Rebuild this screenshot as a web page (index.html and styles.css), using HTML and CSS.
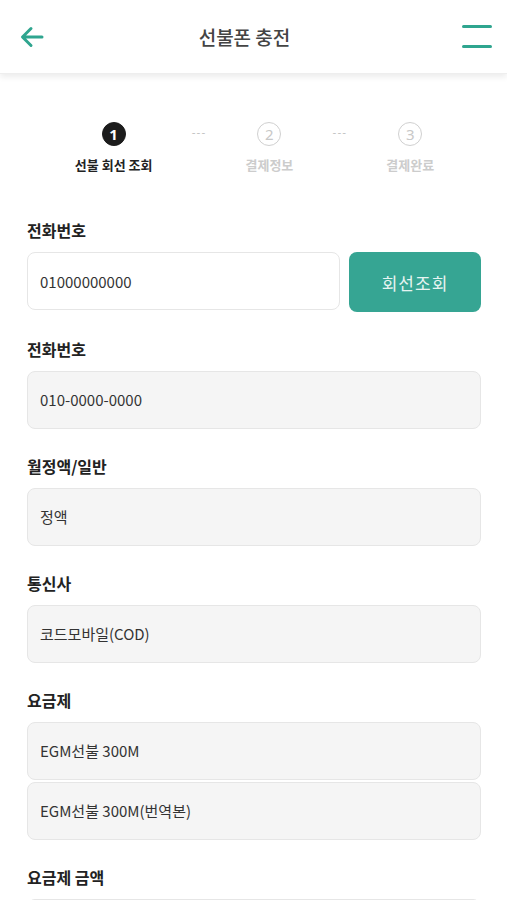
FILE: index.html
```html
<!DOCTYPE html>
<html>
<head>
<title>선불폰 충전</title>
<link rel="stylesheet" href="styles.css">
</head>
<body>

<div class="header">
  <a class="back">
    <svg width="26" height="26" viewBox="0 0 26 26"><path d="M23 13H4M12 4.5L3.5 13 12 21.5" fill="none" stroke="#2fa58f" stroke-width="3" stroke-linecap="round" stroke-linejoin="round"/></svg>
  </a>
  <h1>선불폰 충전</h1>
  <a class="menu">
    <span></span><span></span>
  </a>
</div>

<div class="steps">
  <div class="step active">
    <div class="num">1</div>
    <div class="name">선불 회선 조회</div>
  </div>
  <div class="dots">---</div>
  <div class="step">
    <div class="num">2</div>
    <div class="name">결제정보</div>
  </div>
  <div class="dots">---</div>
  <div class="step">
    <div class="num">3</div>
    <div class="name">결제완료</div>
  </div>
</div>

<form class="form">
  <label class="title">전화번호</label>
  <div class="row">
    <input type="text" class="field" value="01000000000">
    <button type="button" class="btn">회선조회</button>
  </div>

  <label class="title">전화번호</label>
  <div class="field readonly">010-0000-0000</div>

  <label class="title">월정액/일반</label>
  <div class="field readonly">정액</div>

  <label class="title">통신사</label>
  <div class="field readonly">코드모바일(COD)</div>

  <label class="title">요금제</label>
  <div class="field readonly">EGM선불 300M</div>
  <div class="field readonly stack">EGM선불 300M(번역본)</div>

  <label class="title">요금제 금액</label>
  <div class="field readonly">&nbsp;</div>
</form>

</body>
</html>
```

FILE: styles.css
```css
body {
  margin: 0;
  font-family: "Noto Sans CJK KR", "Noto Sans", sans-serif;
  color: #222;
  background: #fff;
}
.header {
  height: 74px;
  display: flex;
  align-items: center;
  justify-content: space-between;
  padding: 0 15px 0 19px;
  box-shadow: 0 3px 6px rgba(0,0,0,0.08);
  border-bottom: 1px solid #eee;
  box-sizing: border-box;
}
.header h1 {
  margin: 0;
  font-size: 19px;
  font-weight: 500;
  color: #444;
}
.back {
  display: flex;
  width: 30px;
}
.menu {
  display: flex;
  flex-direction: column;
  align-items: flex-end;
  gap: 17px;
  width: 52px;
}
.menu span {
  display: block;
  width: 30px;
  height: 3px;
  background: #2fa58f;
  border-radius: 2px;
}
.steps {
  display: flex;
  justify-content: center;
  align-items: flex-start;
  margin-top: 48px;
  padding-left: 2px;
}
.step {
  display: flex;
  flex-direction: column;
  align-items: center;
}
.num {
  width: 22px;
  height: 22px;
  border-radius: 50%;
  border: 1px solid #d0d0d0;
  color: #c8c8c8;
  font-family: "Noto Sans", sans-serif;
  font-size: 15px;
  line-height: 22px;
  text-align: center;
}
.step.active .num {
  background: #1c1c1c;
  border-color: #1c1c1c;
  color: #fff;
  font-weight: bold;
}
.name {
  margin-top: 9px;
  font-size: 13px;
  font-weight: bold;
  color: #ccc;
}
.step.active .name {
  color: #222;
}
.dots {
  width: 15px;
  margin: 0 39px;
  text-align: center;
  font-size: 11px;
  letter-spacing: 1px;
  color: #bbb;
  line-height: 20px;
  white-space: nowrap;
}
.form {
  padding: 45px 26px 0 27px;
}
.title {
  display: block;
  font-size: 16px;
  font-weight: bold;
  line-height: 22px;
  margin: 0 0 11px;
}
.row {
  display: flex;
  gap: 9px;
  margin-bottom: 26px;
}
.field {
  display: block;
  box-sizing: border-box;
  height: 58px;
  padding: 0 12px;
  border: 1px solid #e6e6e6;
  border-radius: 8px;
  font-family: "Noto Sans CJK KR", "Noto Sans", sans-serif;
  font-size: 15px;
  color: #333;
  background: #fff;
  line-height: 56px;
}
.row .field {
  flex: 1;
  outline: none;
}
.readonly {
  background: #f5f5f5;
  margin-bottom: 26px;
}
.readonly.stack {
  margin-top: -24px;
}
.btn {
  width: 132px;
  height: 60px;
  border: none;
  border-radius: 8px;
  background: #36a593;
  color: #e6f4f1;
  font-family: "Noto Sans CJK KR", sans-serif;
  font-size: 17px;
  letter-spacing: 1px;
}
```
